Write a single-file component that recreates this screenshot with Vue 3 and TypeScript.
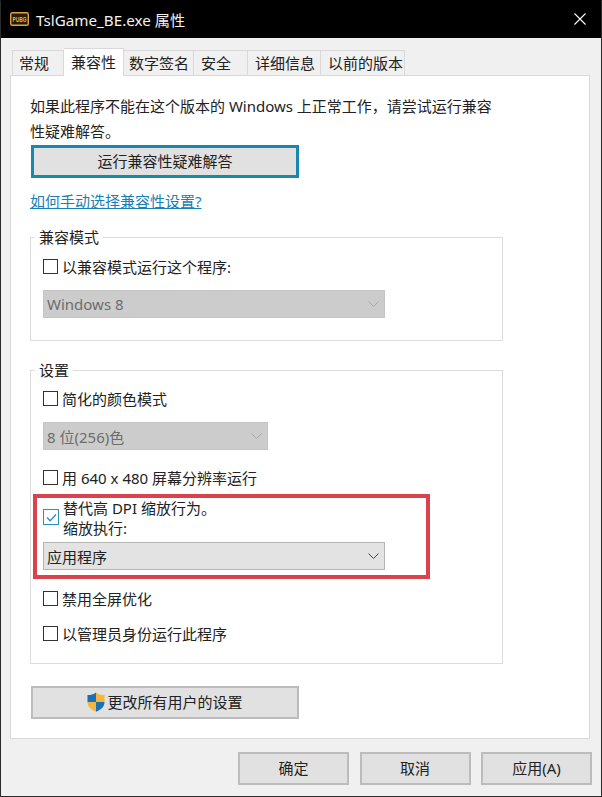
<script setup lang="ts">
const tabs = [
  { label: '常规', width: 52, pad: 6 },
  { label: '兼容性', width: 60, pad: 7 },
  { label: '数字签名', width: 70, pad: 5 },
  { label: '安全', width: 54, pad: 7 },
  { label: '详细信息', width: 73, pad: 7 },
  { label: '以前的版本', width: 84, pad: 7 },
]
const footerButtons = ['确定', '取消', '应用(A)']
</script>

<template>
  <div class="window">
    <header class="titlebar">
      <svg class="logo" width="19" height="14" viewBox="0 0 19 14">
        <rect x="0.7" y="0.7" width="17.6" height="12.6" rx="1.5" fill="#2a1c08" stroke="#d9a441" stroke-width="1.4" />
        <text transform="translate(9.500 10.300) scale(1 1.600)" text-anchor="middle" font-size="4.800" font-weight="700" fill="#e8b450" font-family="'Liberation Sans', sans-serif">PUBG</text>
      </svg>
      <span class="title">TslGame_BE.exe 属性</span>
      <svg class="close" width="12" height="12" viewBox="0 0 12 12">
        <path d="M0.500 0.500l11 11M11.500 0.500l-11 11" stroke="#fff" stroke-width="1.100" fill="none" />
      </svg>
    </header>

    <div class="client">
      <nav class="tabs">
        <div
          v-for="(tab, i) in tabs"
          :key="tab.label"
          class="tab"
          :class="{ active: i === 1 }"
          :style="{ width: tab.width + 'px', paddingLeft: tab.pad + 'px' }"
        >
          {{ tab.label }}
        </div>
      </nav>

      <main class="panel">
        <p class="intro">如果此程序不能在这个版本的 Windows 上正常工作，请尝试运行兼容<br />性疑难解答。</p>
        <button class="btn trouble">运行兼容性疑难解答</button>
        <a class="link" href="#">如何手动选择兼容性设置?</a>

        <fieldset class="group compat">
          <legend>兼容模式</legend>
          <label class="check"><span class="box"></span>以兼容模式运行这个程序:</label>
          <div class="select wide disabled">
            <span>Windows 8</span>
            <svg width="11" height="6" viewBox="0 0 11 6"><path d="M0.500 0.500l5 5 5-5" fill="none" stroke="#a8a8a8" /></svg>
          </div>
        </fieldset>

        <fieldset class="group settings">
          <legend>设置</legend>
          <label class="check"><span class="box"></span>简化的颜色模式</label>
          <div class="select narrow disabled">
            <span>8 位(256)色</span>
            <svg width="11" height="6" viewBox="0 0 11 6"><path d="M0.500 0.500l5 5 5-5" fill="none" stroke="#a8a8a8" /></svg>
          </div>
          <label class="check res"><span class="box"></span>用 640 x 480 屏幕分辨率运行</label>

          <div class="dpi">
            <div class="highlight"></div>
            <div class="dpi-row">
              <span class="box checked">
                <svg width="13" height="13" viewBox="0 0 13 13"><path d="M2 6.500l3.200 3.200L11 3.500" fill="none" stroke="#2b8fc0" stroke-width="1.300" /></svg>
              </span>
              <div class="dpi-text">替代高 DPI 缩放行为。<br />缩放执行:</div>
            </div>
            <div class="select wide">
              <span>应用程序</span>
              <svg width="11" height="6" viewBox="0 0 11 6"><path d="M0.500 0.500l5 5 5-5" fill="none" stroke="#444" /></svg>
            </div>
          </div>

          <label class="check fullscreen"><span class="box"></span>禁用全屏优化</label>
          <label class="check admin"><span class="box"></span>以管理员身份运行此程序</label>
        </fieldset>

        <button class="btn all-users">
          <svg class="shield" width="18" height="20" viewBox="0 0 18 20">
            <path d="M9 0.500C6.500 2.500 4 3 0.500 3V10H9V0.500z" fill="#1b6fb5" />
            <path d="M9 0.500c2.500 2 5 2.500 8.500 2.500V10H9V0.500z" fill="#f4b73d" />
            <path d="M9 10h8.500c0 4.800-3.500 7.800-8.500 9.700V10z" fill="#1b6fb5" />
            <path d="M0.500 10H9v9.700C4 17.800 0.500 14.800 0.500 10z" fill="#f4b73d" />
          </svg>
          <span>更改所有用户的设置</span>
        </button>
      </main>

      <footer class="footer">
        <button v-for="label in footerButtons" :key="label" class="btn foot">{{ label }}</button>
      </footer>
    </div>
  </div>
</template>

<style>
html,
body {
  margin: 0;
  background: #f0f0f0;
}
</style>

<style scoped>
.window {
  width: 602px;
  height: 797px;
  box-sizing: border-box;
  display: flex;
  flex-direction: column;
  border: 1px solid #2b2b2b;
  border-top-color: #000;
  font-family: "Noto Sans", "Noto Sans CJK SC", sans-serif;
  font-size: 15px;
  color: #222;
  background: #f0f0f0;
  overflow: hidden;
}

.titlebar {
  height: 37px;
  box-sizing: border-box;
  flex: none;
  background: #000;
  display: flex;
  align-items: center;
  padding: 0 15px 2px 9px;
  color: #f2f2f2;
}

.logo {
  margin-right: 7px;
}

.title {
  font-size: 15.200px;
}

.close {
  margin-left: auto;
}

.client {
  flex: 1;
  display: flex;
  flex-direction: column;
  padding: 11px 11px 11px 9px;
  min-height: 0;
}

.tabs {
  display: flex;
  height: 26px;
  padding-left: 2px;
  flex: none;
  align-items: flex-end;
  position: relative;
  z-index: 1;
}

.tab {
  height: 25px;
  box-sizing: border-box;
  border: 1px solid #d9d9d9;
  border-left: 0;
  border-bottom: 0;
  background: #f0f0f0;
  line-height: 25px;
  white-space: nowrap;
}

.tab:first-child {
  border-left: 1px solid #d9d9d9;
}

.tab.active {
  height: 28px;
  margin-bottom: -1px;
  background: #fff;
  line-height: 27px;
}

.panel {
  height: 664px;
  flex: none;
  box-sizing: border-box;
  background: #fff;
  border: 1px solid #d9d9d9;
  padding: 18px 20px 0 20px;
  display: flex;
  flex-direction: column;
  align-items: flex-start;
}

.intro {
  margin: 0 0 0 -1px;
  line-height: 25px;
  white-space: nowrap;
  height: 50px;
}

.btn {
  font: inherit;
  color: #222;
  background: #e1e1e1;
  border: 2px solid #bcbcbc;
  padding: 0 0 2px;
  box-sizing: border-box;
}

.trouble {
  width: 268px;
  height: 33px;
  margin-top: 1px;
  border: 3px solid #1a88ad;
}

.link {
  margin-top: 13px;
  margin-left: -1px;
  height: 20px;
  line-height: 20px;
  color: #1a7fb5;
  text-decoration: underline;
}

.group {
  width: 473px;
  box-sizing: border-box;
  margin: 0;
  padding: 0 0 0 12px;
  border: 1px solid #dcdcdc;
  min-width: 0;
}

.group legend {
  margin-left: -8px;
  padding: 0 4px;
  line-height: 20px;
  height: 20px;
}

.compat {
  height: 114px;
  margin-top: 16px;
  margin-left: -1px;
}

.settings {
  height: 304px;
  margin-top: 19px;
  margin-left: -1px;
}

.check {
  display: flex;
  align-items: center;
  height: 20px;
  white-space: nowrap;
}

.box {
  width: 15px;
  height: 15px;
  box-sizing: border-box;
  border: 1px solid #333;
  background: #fff;
  margin-right: 4px;
  flex: none;
  display: flex;
  align-items: center;
  justify-content: center;
}

.box.checked {
  width: 16px;
  height: 16px;
  margin-top: -5px;
  margin-right: 4px;
  border-color: #2b8fc0;
}

.select {
  box-sizing: border-box;
  height: 28px;
  display: flex;
  align-items: center;
  justify-content: space-between;
  background: #e3e3e3;
  border: 1px solid #b5b5b5;
  padding: 0 5px 0 3px;
}

.select.disabled {
  background: #cccccc;
  border-color: #c4c4c4;
  color: #6d6d6d;
}

.wide {
  width: 342px;
}

.narrow {
  width: 225px;
}

.compat .check {
  margin-top: 9px;
}

.compat .select {
  margin-top: 14px;
}

.settings .check:first-of-type {
  margin-top: 8px;
}

.settings .select.narrow {
  margin-top: 14px;
}

.res {
  margin-top: 17px;
}

.dpi {
  position: relative;
  margin-top: 7px;
}

.highlight {
  position: absolute;
  left: -10px;
  top: 0;
  width: 397px;
  height: 85px;
  box-sizing: border-box;
  border: 4px solid #d8434e;
  pointer-events: none;
}

.dpi-row {
  display: flex;
  align-items: center;
  padding-top: 3px;
  height: 48px;
  box-sizing: border-box;
}

.dpi-text {
  line-height: 20px;
  margin-top: -3px;
}

.fullscreen {
  margin-top: 18px;
}

.admin {
  margin-top: 15px;
}

.all-users {
  width: 268px;
  height: 33px;
  margin-top: 22px;
  display: flex;
  align-items: center;
  justify-content: center;
}

.shield {
  margin-right: 2px;
}

.footer {
  flex: none;
  display: flex;
  justify-content: flex-end;
  gap: 10.500px;
  margin-top: 13px;
  margin-right: -2px;
}

.foot {
  width: 111px;
  height: 33px;
}
</style>
